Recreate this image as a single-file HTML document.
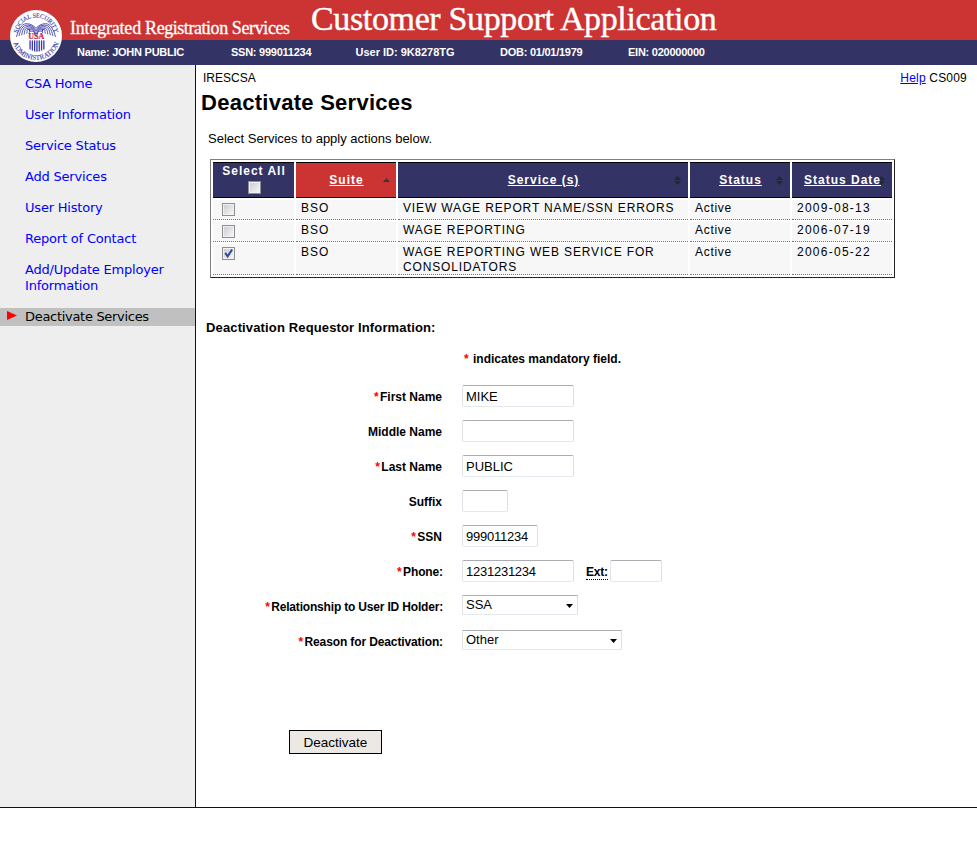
<!DOCTYPE html>
<html lang="en">
<head>
<meta charset="utf-8">
<title>Customer Support Application - Deactivate Services</title>
<style>
html,body{margin:0;padding:0;background:#fff;}
body{width:977px;height:843px;position:relative;overflow:hidden;font-family:"Liberation Sans",Arial,sans-serif;font-size:13px;color:#000;}
a{color:#0000ff;}
#banner{position:absolute;left:0;top:0;width:977px;height:40px;background:#cc3333;}
#infobar{position:absolute;left:0;top:40px;width:977px;height:25px;background:#333366;color:#fff;font-weight:bold;font-size:11px;letter-spacing:-0.25px;}
#infobar span{position:absolute;top:6px;white-space:nowrap;line-height:13px;}
#logo{position:absolute;left:10px;top:10px;width:52px;height:52px;}
#irs{position:absolute;left:70px;top:17px;-webkit-text-stroke:0.3px #fff;font-family:"Liberation Serif","Times New Roman",serif;font-size:18px;color:#fff;letter-spacing:-0.38px;white-space:nowrap;line-height:22px;}
#csa{position:absolute;left:311px;top:0px;-webkit-text-stroke:0.4px #fff;font-family:"Liberation Serif","Times New Roman",serif;font-size:34px;color:#fff;letter-spacing:-0.36px;white-space:nowrap;line-height:38px;}
#nav{position:absolute;left:0;top:65px;width:195px;height:742px;background:#eeeeee;border-right:1px solid #0000a0;}
#nav ul{list-style:none;margin:0;padding:0;}
#nav li{position:absolute;left:0;width:195px;font-family:"DejaVu Sans",Verdana,sans-serif;font-size:13px;letter-spacing:-0.2px;line-height:16px;}
#nav li a{display:block;padding-left:25px;position:relative;top:1px;color:#0000ff;text-decoration:none;}
#nav li.current{background:#c0c0c0;height:18px;}
#nav li.current a{color:#000;line-height:18px;top:0;letter-spacing:-0.3px;}
#nav li.current:before{content:"";position:absolute;left:7px;top:3px;width:10px;height:9px;background:#ff0000;clip-path:polygon(0 0,100% 50%,0 100%);}
#footline{position:absolute;left:0;top:807px;width:977px;height:1px;background:#0000a0;}
#main{position:absolute;left:196px;top:65px;width:781px;height:742px;}
#appid{position:absolute;left:7px;top:6px;font-size:12px;line-height:14px;}
#help{position:absolute;right:10px;top:6px;font-size:12px;line-height:14px;letter-spacing:0.2px;}
h1{position:absolute;left:5px;top:25px;margin:0;letter-spacing:0.27px;font-size:22px;line-height:26px;font-weight:bold;}
#intro{position:absolute;left:12px;top:66px;font-size:13px;line-height:15px;margin:0;}
#svc{position:absolute;left:14px;top:94px;width:685px;border:1px solid #808080;border-right-color:#222;border-bottom-color:#222;border-collapse:separate;border-spacing:2px;letter-spacing:1px;font-size:12px;table-layout:fixed;}
#svc th{background:#333366;color:#fff;font-weight:bold;height:34px;padding:0 0 0 1px;border:0;border-top:1px solid #000;border-bottom:1px solid #000;vertical-align:middle;position:relative;line-height:14px;}
#svc th a{color:#fff;position:relative;z-index:1;}
#svc th.sorted{background:#cc3333;}
#svc th i{position:absolute;right:7px;top:13px;width:7px;height:9px;}
#svc th i:before{content:"";position:absolute;left:0;top:0;width:7px;height:4px;background:#1e2d1e;clip-path:polygon(50% 0,100% 100%,0 100%);}
#svc th i:after{content:"";position:absolute;left:0;top:5px;width:7px;height:4px;background:#1e2d1e;clip-path:polygon(0 0,100% 0,50% 100%);}
#svc th.sorted i:after{display:none;}
#svc th.sorted i{top:15px;right:6px;}
#svc th.sorted i:before{background:#2f3b3b;}
#svc th.first{vertical-align:top;padding-top:1px;height:33px;}
#svc td{background:#f7f7f7;border-bottom:1px dotted #777;padding:1px 4px 0 5px;vertical-align:top;line-height:14.5px;}
#svc td:nth-child(3){letter-spacing:0.86px;}
#svc td:nth-child(4){letter-spacing:0.7px;}
#svc td:nth-child(5){letter-spacing:1.26px;}
#svc td.cb{padding:3px 0 3px 9px;}
input[type=checkbox]{appearance:none;-webkit-appearance:none;width:13px;height:13px;margin:0;border:1px solid #8e8f8f;background:linear-gradient(135deg,#c6cad1 0%,#f4f4f4 90%);box-shadow:inset 0 0 0 1px #f1f1f1;display:block;position:relative;box-sizing:border-box;}
#svc th input{margin:3px auto 0 auto;position:relative;left:0.5px;}
input[type=checkbox]:checked:after{content:"";position:absolute;left:-1px;top:-1px;width:13px;height:13px;background:#34499f;clip-path:polygon(2.4px 6.6px,4.1px 5.2px,5.6px 7.6px,9.3px 2px,11px 3px,5.7px 11.2px);}
h2{position:absolute;left:10px;top:255px;margin:0;letter-spacing:0.14px;font-size:13px;line-height:16px;font-weight:bold;}
.row{position:absolute;left:0;width:781px;height:22px;}
.row label{position:absolute;right:534px;top:5px;font-weight:bold;font-size:12px;letter-spacing:-0.12px;line-height:14px;white-space:nowrap;}
.row label.nc{right:535px;letter-spacing:0;}
.req{color:#ff0000;display:inline-block;width:6px;margin-left:1px;}
.txt{position:absolute;left:266px;top:0;height:20px;width:107px;border:1px solid;border-color:#abadb3 #dbdfe6 #e3e9ef #e2e3ea;border-radius:2px;background:#fff;font-family:"Liberation Sans",Arial,sans-serif;font-size:13px;padding:0 0 0 3px;margin:0;box-sizing:content-box;color:#000;}
.dd{position:absolute;left:266px;top:0;height:18px;border:1px solid;border-color:#abadb3 #dbdfe6 #e3e9ef #e2e3ea;border-radius:1px;background:#fff;font-size:13px;line-height:18px;padding-left:3px;box-sizing:content-box;}
.dd:after{content:"";position:absolute;right:4px;top:8px;width:7px;height:4px;background:#000;clip-path:polygon(0 0,100% 0,50% 100%);}
#btn{position:absolute;left:93px;top:665px;width:93px;height:24px;box-sizing:border-box;border:1px solid #000;background:#ece9e4;font-family:"Liberation Sans",Arial,sans-serif;font-size:13.5px;padding:0;margin:0;color:#000;}
</style>
</head>
<body>
<div id="banner">
  <div id="irs"><span style="letter-spacing:-0.2px">Integrated</span> <span style="letter-spacing:-0.45px">Registration</span> Services</div>
  <div id="csa">Customer Support Application</div>
</div>
<div id="infobar">
  <span style="left:77px">Name: JOHN PUBLIC</span>
  <span style="left:231px">SSN: 999011234</span>
  <span style="left:355.5px;letter-spacing:0">User ID: 9K8278TG</span>
  <span style="left:500px">DOB: 01/01/1979</span>
  <span style="left:628px">EIN: 020000000</span>
</div>
<svg id="logo" viewBox="0 0 52 52">
  <defs>
    <path id="arcT" d="M7.5 26 A18.5 18.5 0 0 1 44.5 26"/>
    <path id="arcB" d="M2.2 26 A23.8 23.8 0 0 0 49.8 26"/>
  </defs>
  <circle cx="26" cy="26" r="26" fill="#fff"/>
  <text font-family="Liberation Serif, serif" font-size="6.3" fill="#3a3aa6" stroke="#3a3aa6" stroke-width="0.12"><textPath href="#arcT" startOffset="50%" text-anchor="middle" textLength="52" lengthAdjust="spacing">SOCIAL SECURITY</textPath></text>
  <text font-family="Liberation Serif, serif" font-size="6.8" fill="#3a3aa6" stroke="#3a3aa6" stroke-width="0.12"><textPath href="#arcB" startOffset="50%" text-anchor="middle" textLength="60" lengthAdjust="spacing">ADMINISTRATION</textPath></text>
  <g fill="none" stroke="#2a2aa0" stroke-width="0.8" stroke-linecap="round">
    <path d="M6.6 26.5 C7.8 20.5 11.7 13.7 16.2 13.7 S23.1 15.4 25.6 17.8"/>
    <path d="M45.4 26.5 C44.2 20.5 40.3 13.7 35.8 13.7 S28.9 15.4 26.4 17.8"/>
    <path d="M9.1 25.7 C10.3 19.7 12.7 15.2 17.2 15.2 S23.1 16.9 25.6 19.3"/>
    <path d="M42.9 25.7 C41.6 19.7 39.3 15.2 34.8 15.2 S28.9 16.9 26.4 19.3"/>
    <path d="M11.7 24.9 C12.9 18.9 13.7 16.7 18.2 16.7 S23.1 18.4 25.6 20.8"/>
    <path d="M40.3 24.9 C39.1 18.9 38.3 16.7 33.8 16.7 S28.9 18.4 26.4 20.8"/>
    <path d="M14.2 24.1 C15.4 18.1 14.7 18.2 19.2 18.2 S23.1 19.9 25.6 22.3"/>
    <path d="M37.8 24.1 C36.5 18.1 37.3 18.2 32.8 18.2 S28.9 19.9 26.4 22.3"/>
    <path d="M16.8 23.3 C18.0 17.3 15.7 19.7 20.2 19.7 S23.1 21.4 25.6 23.8"/>
    <path d="M35.2 23.3 C34.0 17.3 36.3 19.7 31.8 19.7 S28.9 21.4 26.4 23.8"/>
    <path d="M19.4 22.5 C20.6 16.5 16.7 21.2 21.2 21.2 S23.1 22.9 25.6 25.3"/>
    <path d="M32.6 22.5 C31.4 16.5 35.3 21.2 30.8 21.2 S28.9 22.9 26.4 25.3"/>
  </g>
  <text x="26.2" y="29.4" text-anchor="middle" font-family="Liberation Serif, serif" font-weight="bold" font-size="8" fill="#d0204a" stroke="#d0204a" stroke-width="0.2">USA</text>
  <g fill="#3a3ab0">
    <rect x="19.4" y="30.4" width="1.3" height="9"/>
    <rect x="21.7" y="30.4" width="1.3" height="10.2"/>
    <rect x="24" y="30.4" width="1.3" height="11"/>
    <rect x="26.3" y="30.4" width="1.3" height="11.4"/>
    <rect x="28.6" y="30.4" width="1.3" height="11"/>
    <rect x="30.9" y="30.4" width="1.3" height="10.2"/>
    <rect x="33.2" y="30.4" width="1.3" height="9"/>
  </g>
</svg>
<div id="nav">
  <ul>
    <li style="top:10px"><a href="#">CSA Home</a></li>
    <li style="top:41px"><a href="#">User Information</a></li>
    <li style="top:72px"><a href="#">Service Status</a></li>
    <li style="top:103px"><a href="#">Add Services</a></li>
    <li style="top:134px"><a href="#">User History</a></li>
    <li style="top:165px"><a href="#">Report of Contact</a></li>
    <li style="top:196px"><a href="#">Add/Update Employer<br>Information</a></li>
    <li class="current" style="top:243px"><a href="#">Deactivate Services</a></li>
  </ul>
</div>
<div id="main">
  <div id="appid">IRESCSA</div>
  <div id="help"><a href="#">Help</a> CS009</div>
  <h1>Deactivate Services</h1>
  <p id="intro">Select Services to apply actions below.</p>
  <table id="svc">
    <colgroup><col style="width:81px"><col style="width:100px"><col style="width:290px"><col style="width:100px"><col style="width:100px"></colgroup>
    <thead>
      <tr>
        <th class="first">Select All<br><input type="checkbox"></th>
        <th class="sorted"><a href="#">Suite</a><i></i></th>
        <th><a href="#">Service (s)</a><i></i></th>
        <th><a href="#">Status</a><i></i></th>
        <th><a href="#">Status Date</a><i></i></th>
      </tr>
    </thead>
    <tbody>
      <tr><td class="cb"><input type="checkbox"></td><td>BSO</td><td>VIEW WAGE REPORT NAME/SSN ERRORS</td><td>Active</td><td>2009-08-13</td></tr>
      <tr><td class="cb"><input type="checkbox"></td><td>BSO</td><td>WAGE REPORTING</td><td>Active</td><td>2006-07-19</td></tr>
      <tr><td class="cb"><input type="checkbox" checked></td><td>BSO</td><td>WAGE REPORTING WEB SERVICE FOR CONSOLIDATORS</td><td>Active</td><td>2006-05-22</td></tr>
    </tbody>
  </table>
  <h2>Deactivation Requestor Information:</h2>
  <div id="mand" style="position:absolute;left:267px;top:287px;font-weight:bold;font-size:12px;line-height:14px;"><span class="req" style="width:9px">*</span>indicates mandatory field.</div>
  <div class="row" style="top:320px"><label class="nc"><span class="req">*</span>First Name</label><input class="txt" type="text" value="MIKE"></div>
  <div class="row" style="top:355px"><label class="nc">Middle Name</label><input class="txt" type="text" value=""></div>
  <div class="row" style="top:390px"><label class="nc"><span class="req">*</span>Last Name</label><input class="txt" type="text" value="PUBLIC"></div>
  <div class="row" style="top:425px"><label class="nc">Suffix</label><input class="txt" type="text" value="" style="width:41px"></div>
  <div class="row" style="top:460px"><label class="nc"><span class="req">*</span>SSN</label><input class="txt" type="text" value="999011234" style="width:71px;letter-spacing:-0.25px"></div>
  <div class="row" style="top:495px"><label><span class="req">*</span>Phone:</label><input class="txt" type="text" value="1231231234" style="letter-spacing:-0.25px"><span style="position:absolute;left:390px;top:5px;font-weight:bold;font-size:12px;letter-spacing:-0.2px;border-bottom:1px dotted #000;line-height:14px;">Ext:</span><input class="txt" type="text" value="" style="left:414px;width:47px"></div>
  <div class="row" style="top:530px"><label style="letter-spacing:-0.18px"><span class="req">*</span>Relationship to User ID Holder:</label><div class="dd" style="width:111px">SSA</div></div>
  <div class="row" style="top:565px"><label><span class="req">*</span>Reason for Deactivation:</label><div class="dd" style="width:155px">Other</div></div>
  <button id="btn" type="button">Deactivate</button>
</div>
<div id="footline"></div>
</body>
</html>
